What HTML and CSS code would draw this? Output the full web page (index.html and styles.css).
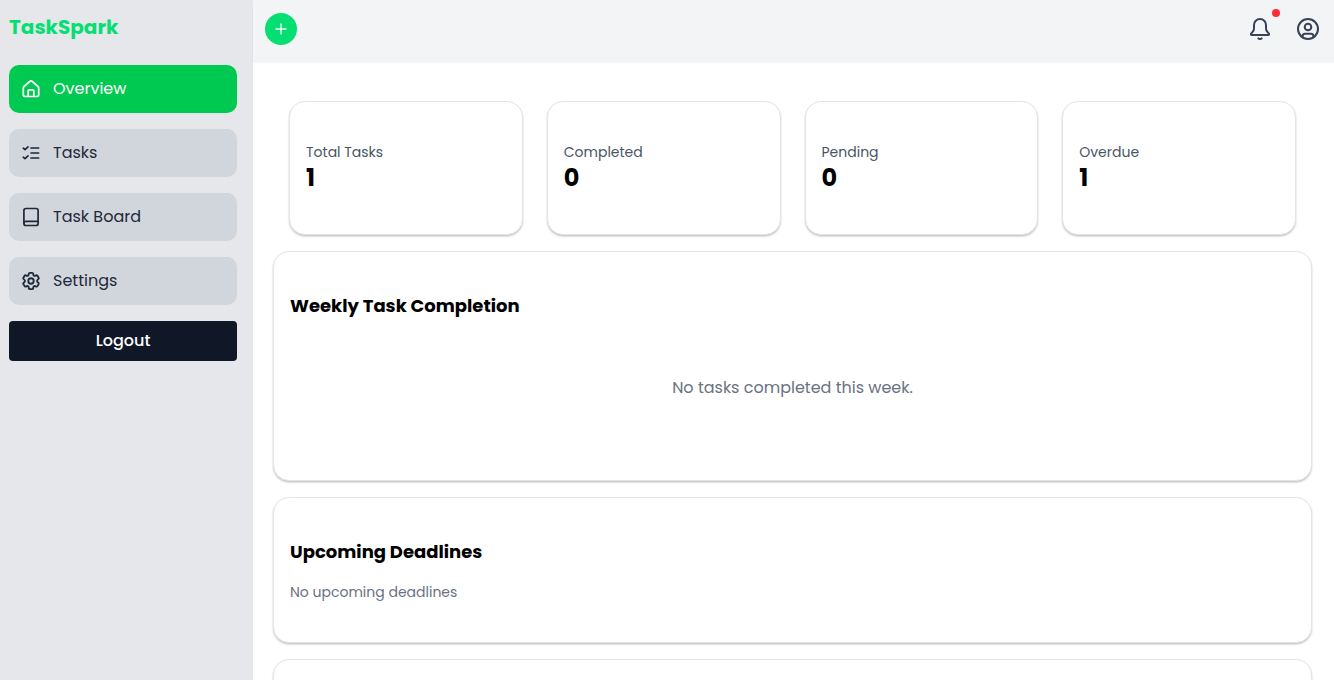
FILE: index.html
```html
<!DOCTYPE html>
<html lang="en">
<head>
<meta charset="utf-8">
<meta name="viewport" content="width=device-width, initial-scale=1">
<title>TaskSpark</title>
<link rel="stylesheet" href="styles.css">
</head>
<body>
<div class="app">
  <aside class="sidebar">
    <h1 class="brand">TaskSpark</h1>
    <nav class="nav">
      <a class="nav-link active" href="#overview">
        <svg class="icon" viewBox="0 0 20 20"><path d="M2.300 9v6.500a2 2 0 0 0 2 2h11.400a2 2 0 0 0 2-2V9a2 2 0 0 0-.7-1.500l-5.700-5a2 2 0 0 0-2.600 0L3 7.500a2 2 0 0 0-.7 1.500z"/><path d="M7.200 17.300v-5.500a1 1 0 0 1 1-1h3.600a1 1 0 0 1 1 1v5.500"/></svg>
        Overview
      </a>
      <a class="nav-link" href="#tasks">
        <svg class="icon" viewBox="0 0 20 20"><path d="M10 5h7.600M10 10h7.600M10 15h7.600M2.300 5.200l1.700 1.500L7 3.900M2.300 14.200L4 15.700l3-2.800"/></svg>
        Tasks
      </a>
      <a class="nav-link" href="#board">
        <svg class="icon" viewBox="0 0 20 20"><rect x="2.900" y="1.500" width="14.200" height="17" rx="2"/><path d="M2.900 16.300a2 2 0 0 1 2-2h12.200"/></svg>
        Task Board
      </a>
      <a class="nav-link" href="#settings">
        <svg class="icon" viewBox="1 1 22 22"><path class="gear" d="M9.600 3.900c.1-.5.600-.9 1.100-.9h2.600c.5 0 1 .4 1.100.9l.2 1.300c.1.400.300.700.600.900l.2.100c.3.200.700.200 1.100.1l1.200-.5c.5-.2 1.100 0 1.400.5l1.300 2.200c.3.500.2 1.100-.3 1.400l-1 .9c-.3.200-.4.600-.4 1v.3c0 .4.1.700.4 1l1 .8c.4.400.5 1 .3 1.500l-1.300 2.200c-.3.500-.9.700-1.400.5l-1.200-.5c-.4-.1-.8-.1-1.100.1l-.2.100c-.3.200-.5.500-.6.900l-.2 1.300c-.1.500-.6.900-1.100.9h-2.600c-.5 0-1-.4-1.100-.9l-.2-1.300c-.1-.4-.3-.7-.6-.9l-.2-.1c-.3-.2-.7-.2-1.100-.1l-1.200.5c-.5.200-1.100 0-1.400-.5l-1.300-2.200c-.3-.5-.2-1.100.3-1.500l1-.8c.3-.3.4-.6.400-1v-.3c0-.4-.1-.8-.4-1l-1-.9c-.5-.3-.6-.9-.3-1.400l1.300-2.200c.3-.5.9-.7 1.400-.5l1.200.5c.4.100.8.100 1.100-.1l.2-.1c.3-.2.5-.5.600-.9z"/><circle class="gear" cx="12" cy="12" r="3"/></svg>
        Settings
      </a>
    </nav>
    <button class="logout" type="button">Logout</button>
  </aside>
  <div class="content">
    <header class="topbar">
      <button class="add" type="button" aria-label="Add task"><svg viewBox="0 0 16 16"><path d="M8 3v10M3 8h10"/></svg></button>
      <div class="actions">
        <button class="action" type="button" aria-label="Notifications">
          <svg viewBox="0 0 24 24"><path d="M12 2a6 6 0 0 0-6 6v3.500c0 1.300-.5 2.300-1.400 3.400l-1.500 1.700c-.4.600-.1 1.400.7 1.400h16.400c.8 0 1.100-.8.700-1.400l-1.500-1.700c-.9-1.100-1.400-2.100-1.400-3.400V8a6 6 0 0 0-6-6z"/><path d="M10.300 21.400c.8.900 2.600.9 3.400 0"/></svg>
          <span class="dot"></span>
        </button>
        <button class="action" type="button" aria-label="Account">
          <svg viewBox="0 0 24 24"><circle cx="12" cy="12" r="10"/><circle cx="12" cy="10" r="3.300"/><path d="M6.500 20.300v-1a2.500 2.500 0 0 1 2.500-2.500h6a2.500 2.500 0 0 1 2.500 2.500v1"/></svg>
        </button>
      </div>
    </header>
    <main class="main">
      <section class="stats">
        <div class="card"><p class="label">Total Tasks</p><p class="value">1</p></div>
        <div class="card"><p class="label">Completed</p><p class="value">0</p></div>
        <div class="card"><p class="label">Pending</p><p class="value">0</p></div>
        <div class="card"><p class="label">Overdue</p><p class="value">1</p></div>
      </section>
      <section class="card">
        <h2 class="title">Weekly Task Completion</h2>
        <p class="empty-chart">No tasks completed this week.</p>
      </section>
      <section class="card">
        <h2 class="title">Upcoming Deadlines</h2>
        <p class="note">No upcoming deadlines</p>
      </section>
      <section class="card next"></section>
    </main>
  </div>
</div>
</body>
</html>
```
FILE: styles.css
```css
* { box-sizing: border-box; }
body, h1, h2, p { margin: 0; }
body {
  font-family: Poppins, Inter, "Noto Sans", sans-serif;
  font-size: 16px;
  line-height: 24px;
  color: #000;
  background: #fff;
}
button { font: inherit; border: 0; padding: 0; cursor: pointer; }
svg {
  display: block;
  fill: none;
  stroke: currentColor;
  stroke-width: 2;
  stroke-linecap: round;
  stroke-linejoin: round;
}
.app { display: flex; height: 100vh; overflow: hidden; }
.sidebar {
  flex: 0 0 253px;
  padding: 13px 16px 16px 9px;
  background: #e5e7eb;
}
.brand {
  margin-bottom: 24px;
  font-size: 20px;
  line-height: 28px;
  font-weight: 700;
  color: #05df72;
}
.nav { display: flex; flex-direction: column; gap: 16px; }
.nav-link {
  display: flex;
  align-items: center;
  gap: 12px;
  padding: 12px;
  border-radius: 10px;
  background: #d1d5dc;
  color: #1e2939;
  text-decoration: none;
}
.nav-link.active { background: #00c951; color: #fff; }
.icon { width: 20px; height: 20px; stroke-width: 1.7; }
.gear { stroke-width: 2; }
.logout {
  width: 100%;
  margin-top: 16px;
  padding: 8px;
  border-radius: 4px;
  background: #101828;
  color: #fff;
  font-weight: 500;
}
.content { flex: 1; min-width: 0; display: flex; flex-direction: column; }
.topbar {
  display: flex;
  justify-content: space-between;
  align-items: center;
  padding: 13px 14px 17px 12px;
  background: #f3f4f6;
  box-shadow: 0 1px 2px rgba(0, 0, 0, .05);
}
.add {
  display: grid;
  place-items: center;
  width: 32px;
  height: 32px;
  border-radius: 50%;
  background: #05df72;
  color: #fff;
}
.add svg { width: 16px; height: 16px; stroke-width: 1.3; }
.actions { display: flex; gap: 24px; }
.action { position: relative; background: none; color: #364153; }
.action svg { width: 24px; height: 24px; stroke-width: 2; }
.dot {
  position: absolute;
  top: -8px;
  right: -8px;
  width: 8px;
  height: 8px;
  border-radius: 50%;
  background: #fb2c36;
}
.main {
  flex: 1;
  display: flex;
  flex-direction: column;
  gap: 16px;
  padding: 39px 22px 0 20px;
  overflow: hidden;
}
.stats {
  display: grid;
  grid-template-columns: repeat(4, 1fr);
  gap: 24px;
  padding: 0 16px;
}
.card {
  flex: none;
  padding: 40px 16px;
  border: 1px solid #e5e5e5;
  border-radius: 16px;
  background: #fff;
  box-shadow: 0 2px 3px -1px rgba(0, 0, 0, .2), 0 1px 2px rgba(0, 0, 0, .12);
}
.label { font-size: 14px; line-height: 20px; color: #4a5565; }
.value { font-size: 24px; line-height: 32px; font-weight: 700; }
.title { font-size: 18px; line-height: 28px; font-weight: 700; }
.empty-chart {
  display: grid;
  place-items: center;
  height: 104px;
  margin-top: 16px;
  color: #6a7282;
}
.note { margin-top: 16px; font-size: 14px; line-height: 20px; color: #6a7282; }
.next { height: 160px; }
```
